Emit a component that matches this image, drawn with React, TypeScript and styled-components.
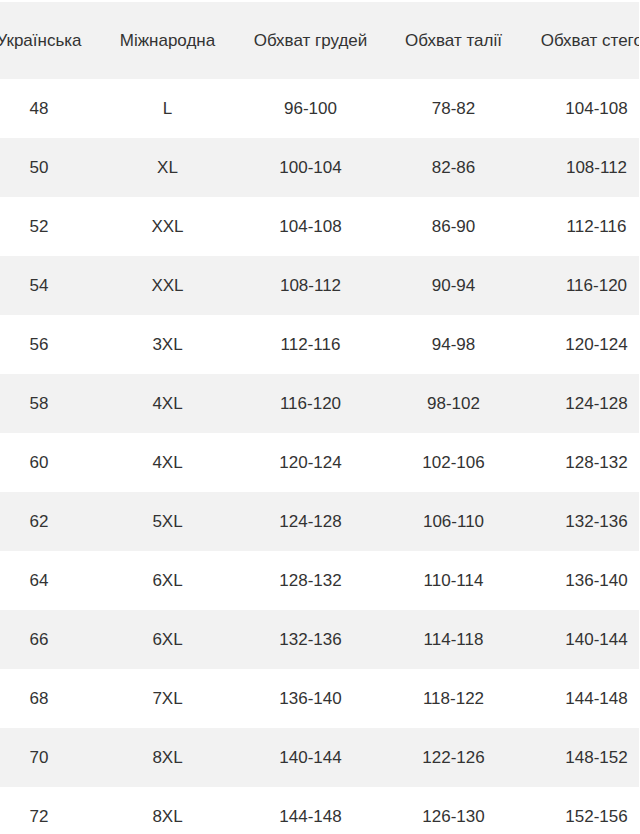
import React, { FC } from 'react';
import styled, { createGlobalStyle } from 'styled-components';

const GlobalStyle = createGlobalStyle`
  html, body {
    margin: 0;
    padding: 0;
    background: #ffffff;
    overflow: hidden;
  }
  body {
    font-family: 'Liberation Sans', Arial, sans-serif;
  }
`;

const Frame = styled('div')`
  padding-top: 2px;
  width: 639px;
  overflow: hidden;
`;

const Table = styled('table')`
  width: 686px;
  margin-left: -18px;
  border-collapse: collapse;
  table-layout: fixed;
  font-size: 17px;
  color: #333333;
`;

const HeadCell = styled('th')`
  height: 77px;
  padding: 0;
  font-weight: 400;
  text-align: center;
  white-space: nowrap;
  background-color: #f2f2f2;
`;

const Row = styled('tr')<{ shaded: boolean }>`
  background-color: ${props => (props.shaded ? '#f2f2f2' : '#ffffff')};
`;

const Cell = styled('td')`
  height: 59px;
  padding: 0;
  text-align: center;
  white-space: nowrap;
`;

const columns = [
  { title: 'Українська', width: 114 },
  { title: 'Міжнародна', width: 143 },
  { title: 'Обхват грудей', width: 143 },
  { title: 'Обхват талії', width: 143 },
  { title: 'Обхват стегон', width: 143 },
];

const sizes = [
  ['48', 'L', '96-100', '78-82', '104-108'],
  ['50', 'XL', '100-104', '82-86', '108-112'],
  ['52', 'XXL', '104-108', '86-90', '112-116'],
  ['54', 'XXL', '108-112', '90-94', '116-120'],
  ['56', '3XL', '112-116', '94-98', '120-124'],
  ['58', '4XL', '116-120', '98-102', '124-128'],
  ['60', '4XL', '120-124', '102-106', '128-132'],
  ['62', '5XL', '124-128', '106-110', '132-136'],
  ['64', '6XL', '128-132', '110-114', '136-140'],
  ['66', '6XL', '132-136', '114-118', '140-144'],
  ['68', '7XL', '136-140', '118-122', '144-148'],
  ['70', '8XL', '140-144', '122-126', '148-152'],
  ['72', '8XL', '144-148', '126-130', '152-156'],
];

const App: FC = () => {
  return (
    <>
      <GlobalStyle />
      <Frame>
        <Table>
          <colgroup>
            {columns.map(col => (
              <col key={col.title} style={{ width: col.width }} />
            ))}
          </colgroup>
          <thead>
            <tr>
              {columns.map(col => (
                <HeadCell key={col.title}>{col.title}</HeadCell>
              ))}
            </tr>
          </thead>
          <tbody>
            {sizes.map((row, i) => (
              <Row key={row[0]} shaded={i % 2 === 1}>
                {row.map((value, j) => (
                  <Cell key={j}>{value}</Cell>
                ))}
              </Row>
            ))}
          </tbody>
        </Table>
      </Frame>
    </>
  );
};

export default App;
